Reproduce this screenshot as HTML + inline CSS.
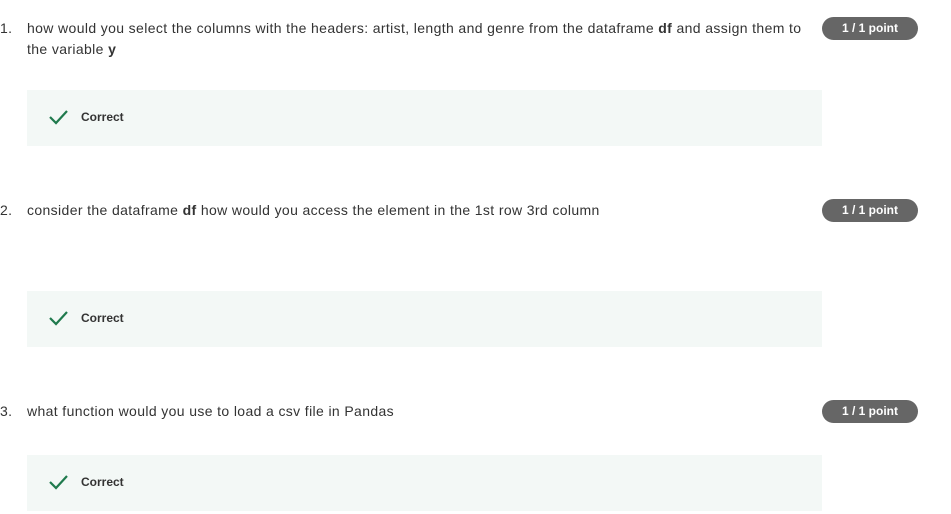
<!DOCTYPE html>
<html><head><style>
body{margin:0;width:951px;height:514px;background:#fff;font-family:"Liberation Sans",sans-serif;color:#333;position:relative;overflow:hidden}
.q{position:absolute;left:0;font-size:14px;line-height:21px;width:800px;letter-spacing:0.37px}
.q .n{position:absolute;left:0}
.q .t{position:absolute;left:27px;width:785px}
.b{position:absolute;left:822px;width:96px;height:23px;border-radius:12px;background:#666;color:#fff;font-size:12px;font-weight:bold;text-align:center;line-height:23px}
.box{position:absolute;left:27px;width:795px;height:56px;background:#f3f8f6}
.box svg{position:absolute;left:21px;top:19px}
.box span{position:absolute;left:54px;top:20px;font-size:12px;font-weight:bold;color:#333}
</style></head><body>
<div class="q" style="top:18px"><span class="n">1.</span><span class="t">how would you select the columns with the headers: artist, length and genre from the dataframe <b>df</b> and assign them to the variable <b>y</b></span></div>
<div class="b" style="top:17px">1 / 1 point</div>
<div class="box" style="top:90px"><svg width="20" height="16" viewBox="0 0 20 16"><path d="M2 8l6 6L19 2" fill="none" stroke="#1f7a4d" stroke-width="2.2"/></svg><span>Correct</span></div>

<div class="q" style="top:200px"><span class="n">2.</span><span class="t">consider the dataframe <b>df</b> how would you access the element in the 1st row 3rd column</span></div>
<div class="b" style="top:199px">1 / 1 point</div>
<div class="box" style="top:291px"><svg width="20" height="16" viewBox="0 0 20 16"><path d="M2 8l6 6L19 2" fill="none" stroke="#1f7a4d" stroke-width="2.2"/></svg><span>Correct</span></div>

<div class="q" style="top:401px"><span class="n">3.</span><span class="t">what function would you use to load a csv file in Pandas</span></div>
<div class="b" style="top:400px">1 / 1 point</div>
<div class="box" style="top:455px"><svg width="20" height="16" viewBox="0 0 20 16"><path d="M2 8l6 6L19 2" fill="none" stroke="#1f7a4d" stroke-width="2.2"/></svg><span>Correct</span></div>
</body></html>
